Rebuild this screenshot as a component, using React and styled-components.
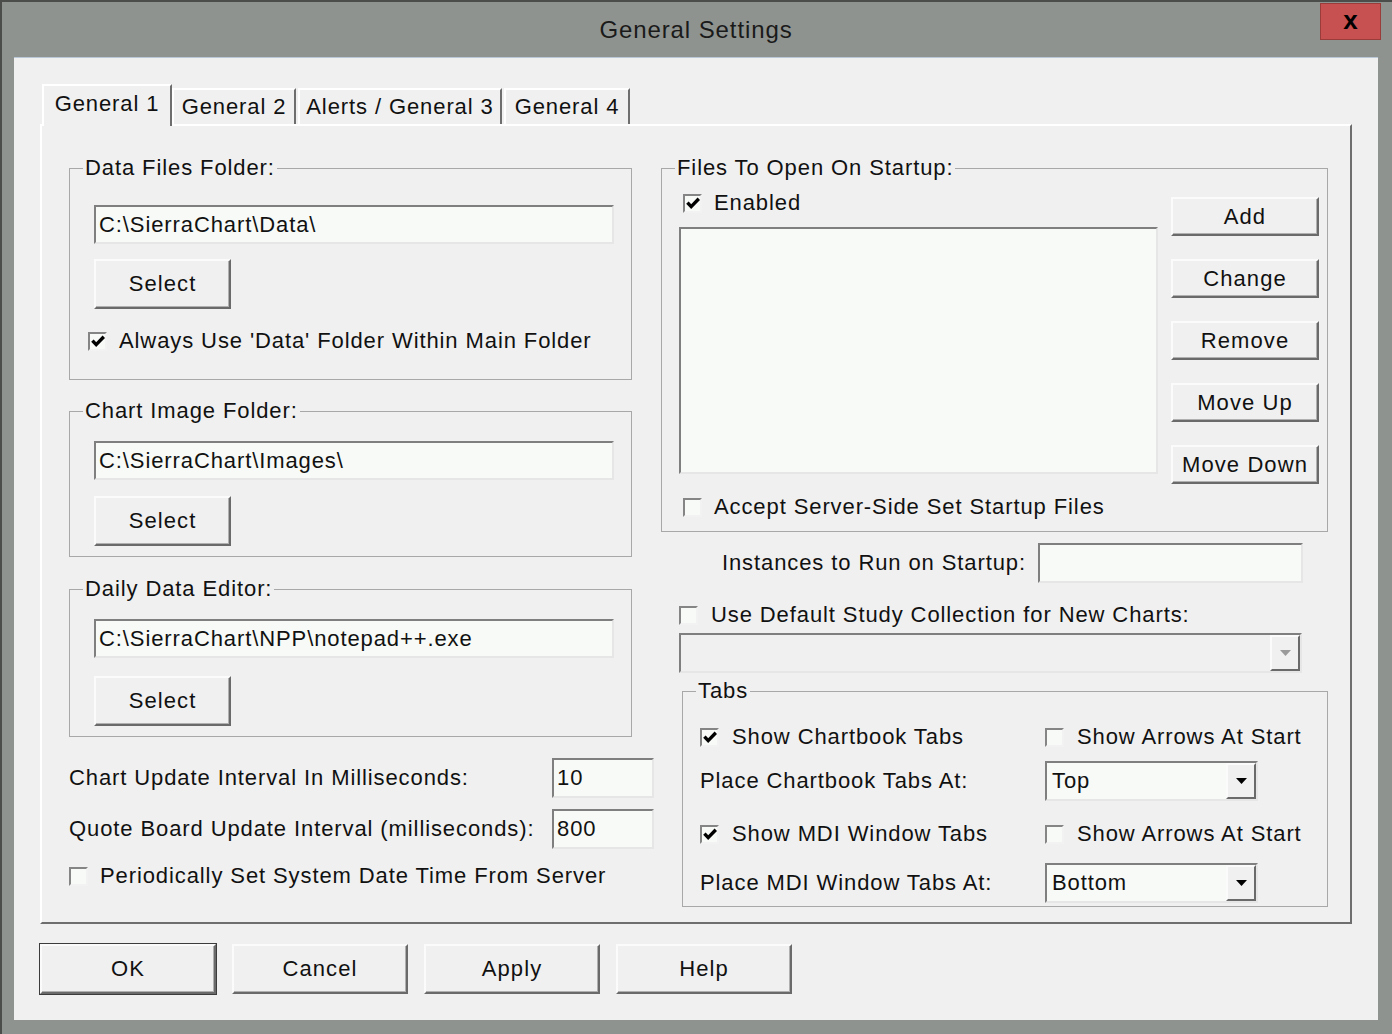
import styled, { createGlobalStyle } from "styled-components";

const GlobalStyle = createGlobalStyle`
  html, body {
    margin: 0;
    padding: 0;
    background: #8f938f;
  }
  body {
    font-family: "Liberation Sans", Arial, sans-serif;
  }
`;

const Frame = styled.div`
  width: 1392px;
  height: 1034px;
  box-sizing: border-box;
  background: #8f938f;
  border-top: 2px solid #4a4d4a;
  border-left: 2px solid #4a4d4a;
  padding: 0 14px 14px 12px;
  display: flex;
  flex-direction: column;
  font-family: "Liberation Sans", Arial, sans-serif;
  letter-spacing: 0.9px;
  color: #111;
`;

const TitleBar = styled.div`
  height: 55px;
  display: grid;
  grid-template-columns: 1fr auto 1fr;
  align-items: center;
`;

const Title = styled.div`
  grid-column: 2;
  font-size: 24px;
  color: #1a1a1a;
  margin-top: 1px;
`;

const CloseButton = styled.div`
  grid-column: 3;
  justify-self: end;
  align-self: start;
  margin-top: 1px;
  margin-right: -3px;
  width: 61px;
  height: 37px;
  box-sizing: border-box;
  background: #c75050;
  border: 1px solid #9a3c3a;
  display: flex;
  align-items: center;
  justify-content: center;
  font-size: 26px;
  font-weight: bold;
  letter-spacing: 0;
  color: #000;
  line-height: 1;
  padding-bottom: 4px;
`;

const Client = styled.div`
  flex: 1;
  background: #f0f0f0;
  border-top: 1px solid #b9c7d6;
  padding: 26px 26px 0 26px;
  display: flex;
  flex-direction: column;
`;

const TabStrip = styled.div`
  display: flex;
  align-items: flex-end;
  height: 40px;
  padding-left: 2px;
`;

const Tab = styled.div`
  width: ${(p) => p.$w}px;
  margin-left: ${(p) => p.$gap || 0}px;
  height: ${(p) => (p.$active ? 42 : 36)}px;
  margin-bottom: ${(p) => (p.$active ? -2 : 0)}px;
  position: relative;
  z-index: ${(p) => (p.$active ? 1 : 0)};
  box-sizing: border-box;
  background: #f0f0f0;
  border-top: 2px solid #ffffff;
  border-left: 2px solid #ffffff;
  border-right: 2px solid #6e6e6e;
  font-size: 22px;
  display: flex;
  justify-content: center;
  padding-top: ${(p) => (p.$active ? 5 : 4)}px;
  white-space: nowrap;
`;

const Panel = styled.div`
  width: 1312px;
  height: 800px;
  box-sizing: border-box;
  border: 2px solid;
  border-color: #ffffff #6e6e6e #6e6e6e #ffffff;
  padding: 29px 0 0 27px;
  display: flex;
  gap: 29px;
  font-size: 22px;
`;

const Column = styled.div`
  width: ${(p) => p.$w}px;
  display: flex;
  flex-direction: column;
  align-items: flex-start;
`;

const GroupBox = styled.fieldset`
  margin: ${(p) => p.$top || 0}px 0 0 ${(p) => p.$left || 0}px;
  padding: ${(p) => p.$pad};
  width: ${(p) => p.$w}px;
  box-sizing: border-box;
  min-width: 0;
  border: 1px solid #a8a8a8;
  display: flex;
  flex-direction: column;
  align-items: flex-start;
`;

const Legend = styled.legend`
  font-size: 22px;
  line-height: 26px;
  padding: 0 2px;
  margin-left: ${(p) => p.$left}px;
`;

const TextField = styled.input`
  width: ${(p) => p.$w}px;
  height: ${(p) => p.$h || 39}px;
  box-sizing: border-box;
  border: 2px solid;
  border-color: #7f7f7f #e6e6e6 #e6e6e6 #7f7f7f;
  background: #f7faf7;
  font-family: "Liberation Sans", Arial, sans-serif;
  font-size: 22px;
  letter-spacing: 0.9px;
  color: #111;
  padding: 0 3px;
  margin: 0;
  outline: none;
`;

const Button = styled.button`
  width: ${(p) => p.$w}px;
  height: ${(p) => p.$h}px;
  margin-top: ${(p) => p.$top || 0}px;
  box-sizing: border-box;
  background: #f0f0f0;
  border: 2px solid;
  border-color: #fbfbfb #6a6a6a #6a6a6a #fbfbfb;
  box-shadow: ${(p) =>
    p.$default
      ? "0 0 0 1px #3c3c3c, inset -1px -1px 0 #b0b0b0"
      : "inset -1px -1px 0 #b0b0b0"};
  font-family: "Liberation Sans", Arial, sans-serif;
  font-size: 22px;
  letter-spacing: 1.1px;
  color: #111;
  padding: 0;
  flex: none;
`;

const CheckRow = styled.label`
  display: flex;
  align-items: center;
  gap: ${(p) => p.$gap || 12}px;
  height: 26px;
  margin-top: ${(p) => p.$top || 0}px;
  margin-left: ${(p) => p.$left || 0}px;
  white-space: nowrap;
`;

const Box = styled.span`
  width: 19px;
  height: 19px;
  box-sizing: border-box;
  flex: none;
  border: 2px solid;
  border-color: #858585 #f2f2f2 #f2f2f2 #858585;
  background: #f7faf7;
  display: flex;
  align-items: center;
  justify-content: center;
`;

const Check = ({ checked }) => (
  <Box>
    {checked && (
      <svg width="14" height="13" viewBox="0 0 14 13">
        <path d="M1.4 5.6 L5.2 9.6 L12.8 1.8" stroke="#000" strokeWidth="3.4" fill="none" />
      </svg>
    )}
  </Box>
);

const CheckBox = ({ checked, label, ...rest }) => (
  <CheckRow {...rest}>
    <Check checked={checked} />
    <span>{label}</span>
  </CheckRow>
);

const NumberGrid = styled.div`
  display: grid;
  grid-template-columns: 483px 102px;
  row-gap: 11px;
  align-items: center;
  margin-top: 21px;
`;

const FilesRow = styled.div`
  display: flex;
  align-items: flex-start;
`;

const ListStack = styled.div`
  width: 479px;
  display: flex;
  flex-direction: column;
`;

const ListBox = styled.div`
  height: 247px;
  margin-top: 11px;
  box-sizing: border-box;
  border: 2px solid;
  border-color: #7f7f7f #e6e6e6 #e6e6e6 #7f7f7f;
  background: #f7faf7;
`;

const ButtonStack = styled.div`
  display: flex;
  flex-direction: column;
  gap: 23px;
  margin: 16px 0 0 13px;
`;

const InstancesRow = styled.div`
  display: flex;
  align-items: center;
  justify-content: flex-end;
  gap: 12px;
  width: 642px;
  margin-top: 11px;
  white-space: nowrap;
`;

const Combo = styled.div`
  width: ${(p) => p.$w}px;
  height: 40px;
  margin: ${(p) => p.$margin || 0};
  box-sizing: border-box;
  border: 2px solid;
  border-color: #7f7f7f #e6e6e6 #e6e6e6 #7f7f7f;
  background: ${(p) => (p.$disabled ? "#f0f0f0" : "#f7faf7")};
  display: flex;
  align-items: stretch;
  font-size: 22px;
`;

const ComboText = styled.div`
  flex: 1;
  display: flex;
  align-items: center;
  padding-left: 5px;
`;

const ComboArrow = styled.div`
  width: 30px;
  box-sizing: border-box;
  background: #f0f0f0;
  border: 2px solid;
  border-color: #fbfbfb #6a6a6a #6a6a6a #fbfbfb;
  display: flex;
  align-items: center;
  justify-content: center;
`;

const Arrow = ({ color }) => (
  <svg width="11" height="6" viewBox="0 0 11 6">
    <polygon points="0,0 11,0 5.5,6" fill={color} />
  </svg>
);

const TabsRow = styled.div`
  display: grid;
  grid-template-columns: 345px auto;
  align-items: center;
  height: ${(p) => p.$h}px;
  margin-top: ${(p) => p.$top}px;
  white-space: nowrap;
`;

const ButtonRow = styled.div`
  display: flex;
  gap: 16px;
  margin-top: 20px;
`;

const FolderGroup = ({ title, value, top, gap }) => (
  <GroupBox $w={563} $top={top} $pad="17px 0 10px 24px">
    <Legend $left={-11}>{title}</Legend>
    <TextField $w={520} readOnly value={value} />
    <Button $w={137} $h={50} $top={gap}>Select</Button>
  </GroupBox>
);

export default function App() {
  return (
    <>
      <GlobalStyle />
      <Frame>
        <TitleBar>
          <Title>General Settings</Title>
          <CloseButton>x</CloseButton>
        </TitleBar>
        <Client>
          <TabStrip>
            <Tab $active $w={130}>General 1</Tab>
            <Tab $w={124}>General 2</Tab>
            <Tab $w={204} $gap={2}>Alerts / General 3</Tab>
            <Tab $w={126} $gap={2}>General 4</Tab>
          </TabStrip>
          <Panel>
            <Column $w={563}>
              <GroupBox $w={563} $pad="24px 0 25px 24px">
                <Legend $left={-11}>Data Files Folder:</Legend>
                <TextField $w={520} readOnly value="C:\SierraChart\Data\" />
                <Button $w={137} $h={50} $top={15}>Select</Button>
                <CheckBox $top={19} $left={-6} checked label="Always Use 'Data' Folder Within Main Folder" />
              </GroupBox>
              <FolderGroup title="Chart Image Folder:" value="C:\SierraChart\Images\" top={18} gap={16} />
              <FolderGroup title="Daily Data Editor:" value="C:\SierraChart\NPP\notepad++.exe" top={19} gap={18} />
              <NumberGrid>
                <span>Chart Update Interval In Milliseconds:</span>
                <TextField $w={102} $h={40} readOnly value="10" />
                <span>Quote Board Update Interval (milliseconds):</span>
                <TextField $w={102} $h={40} readOnly value="800" />
              </NumberGrid>
              <CheckBox $top={14} label="Periodically Set System Date Time From Server" />
            </Column>
            <Column $w={667}>
              <GroupBox $w={667} $pad="0 8px 11px 17px">
                <Legend $left={-4}>Files To Open On Startup:</Legend>
                <FilesRow>
                  <ListStack>
                    <CheckBox $top={9} $left={4} checked label="Enabled" />
                    <ListBox />
                  </ListStack>
                  <ButtonStack>
                    <Button $w={148} $h={39}>Add</Button>
                    <Button $w={148} $h={39}>Change</Button>
                    <Button $w={148} $h={39}>Remove</Button>
                    <Button $w={148} $h={39}>Move Up</Button>
                    <Button $w={148} $h={39}>Move Down</Button>
                  </ButtonStack>
                </FilesRow>
                <CheckBox $top={10} $left={4} label="Accept Server-Side Set Startup Files" />
              </GroupBox>
              <InstancesRow>
                <span>Instances to Run on Startup:</span>
                <TextField $w={265} $h={40} readOnly value="" />
              </InstancesRow>
              <CheckBox $top={19} $left={18} $gap={13} label="Use Default Study Collection for New Charts:" />
              <Combo $w={623} $disabled $margin="5px 0 0 18px">
                <ComboText />
                <ComboArrow>
                  <Arrow color="#9a9a9a" />
                </ComboArrow>
              </Combo>
              <GroupBox $w={646} $top={5} $left={21} $pad="0 0 3px 17px">
                <Legend $left={-4}>Tabs</Legend>
                <TabsRow $h={26} $top={20}>
                  <CheckBox checked $gap={13} label="Show Chartbook Tabs" />
                  <CheckBox $gap={13} label="Show Arrows At Start" />
                </TabsRow>
                <TabsRow $h={40} $top={11}>
                  <span>Place Chartbook Tabs At:</span>
                  <Combo $w={213}>
                    <ComboText>Top</ComboText>
                    <ComboArrow>
                      <Arrow color="#000" />
                    </ComboArrow>
                  </Combo>
                </TabsRow>
                <TabsRow $h={26} $top={20}>
                  <CheckBox checked $gap={13} label="Show MDI Window Tabs" />
                  <CheckBox $gap={13} label="Show Arrows At Start" />
                </TabsRow>
                <TabsRow $h={40} $top={16}>
                  <span>Place MDI Window Tabs At:</span>
                  <Combo $w={213}>
                    <ComboText>Bottom</ComboText>
                    <ComboArrow>
                      <Arrow color="#000" />
                    </ComboArrow>
                  </Combo>
                </TabsRow>
              </GroupBox>
            </Column>
          </Panel>
          <ButtonRow>
            <Button $w={176} $h={50} $default>OK</Button>
            <Button $w={176} $h={50}>Cancel</Button>
            <Button $w={176} $h={50}>Apply</Button>
            <Button $w={176} $h={50}>Help</Button>
          </ButtonRow>
        </Client>
      </Frame>
    </>
  );
}
